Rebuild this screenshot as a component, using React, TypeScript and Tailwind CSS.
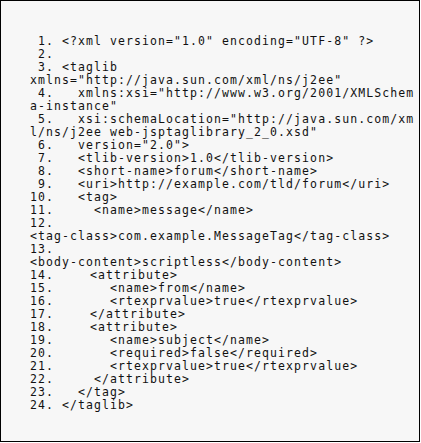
import React from "react";

const rows: { a: string; half?: boolean; b?: string }[] = [
  { a: " 1. <?xml version=\"1.0\" encoding=\"UTF-8\" ?>" },
  { a: " 2." },
  { a: " 3. <taglib" },
  { a: "xmlns=\"http://java.sun.com/xml/ns/j2ee\"" },
  { a: " 4.   xmlns:xsi=\"http://www.w3.org/2001/XMLSchem" },
  { a: "a-instance\"" },
  { a: " 5.   xsi:schemaLocation=\"http://java.sun.com/xm" },
  { a: "l/ns/j2ee web-jsptaglibrary_2_0.xsd\"" },
  { a: " 6.   version=\"2.0\">" },
  { a: " 7.   <tlib-version>1.0</tlib-version>" },
  { a: " 8.   <short-name>forum</short-name>" },
  { a: " 9.   <uri>http://example.com/tld/forum</uri>" },
  { a: "10.   <tag>" },
  { a: "11.     <name>message</name>" },
  { a: "12." },
  { a: "<tag-class>com.example.MessageTag</tag-class>" },
  { a: "13." },
  { a: "<body-content>scriptless</body-content>" },
  { a: "14.    ", half: true, b: "<attribute>" },
  { a: "15.       <name>from</name>" },
  { a: "16.       <rtexprvalue>true</rtexprvalue>" },
  { a: "17.    ", half: true, b: "</attribute>" },
  { a: "18.    ", half: true, b: "<attribute>" },
  { a: "19.       <name>subject</name>" },
  { a: "20.       <required>false</required>" },
  { a: "21.       <rtexprvalue>true</rtexprvalue>" },
  { a: "22.     </attribute>" },
  { a: "23.   </tag>" },
  { a: "24. </taglib>" },
];

export default function App() {
  return (
    <div className="w-[421px] h-[443px] bg-white">
      <div className="w-[420px] h-[442px] border border-black bg-[#f7f7f7] pl-[29px] pt-[34px]">
        <div
          className="text-[#111] text-[11.5px] leading-[13px] tracking-[1.08px]"
          style={{ fontFamily: '"DejaVu Sans Mono", "Liberation Mono", monospace' }}
        >
          {rows.map((r, i) => (
            <div key={i} className="whitespace-pre h-[13px]">
              {r.a}
              {r.half ? <span className="inline-block w-[4px]" /> : null}
              {r.b ?? ""}
            </div>
          ))}
        </div>
      </div>
    </div>
  );
}
